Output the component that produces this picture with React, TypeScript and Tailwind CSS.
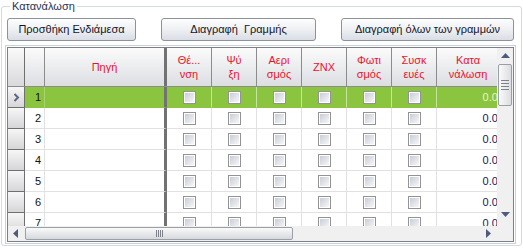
import React from "react";

const cols: { a: string; b?: string }[] = [
  { a: "Θέ...", b: "νση" },
  { a: "Ψύ", b: "ξη" },
  { a: "Αερι", b: "σμός" },
  { a: "ZNX" },
  { a: "Φωτι", b: "σμός" },
  { a: "Συσκ", b: "ευές" },
];

const rows = [1, 2, 3, 4, 5, 6, 7];

function Check() {
  return (
    <div className="w-[13px] h-[13px] border border-[#939393] bg-white p-px">
      <div className="w-full h-full bg-gradient-to-br from-[#c9cdd6] to-[#f6f7f9]" />
    </div>
  );
}

function Btn({ w, ml, children }: { w: string; ml: string; children: React.ReactNode }) {
  return (
    <button
      className={`${w} ${ml} h-[23px] rounded-[3px] border border-[#8d9198] bg-gradient-to-b from-[#fdfdfd] via-[#eef0f3] to-[#d9dee5] text-[#15152a] whitespace-pre text-center leading-[21px]`}
    >
      {children}
    </button>
  );
}

export default function App() {
  return (
    <div className="w-[523px] h-[249px] bg-white pl-px font-['Liberation_Sans',Arial,sans-serif] text-[11px] text-[#15152a] overflow-hidden">
      <fieldset className="w-[521px] h-[246px] border border-[#d3dae2] rounded-[3px] px-[5px]">
        <legend className="ml-[3px] px-[2px] leading-[13px] text-[#1e3556]">Κατανάλωση</legend>
        <div className="flex mt-[5px]">
          <Btn w="w-[129px]" ml="ml-0">Προσθήκη Ενδιάμεσα</Btn>
          <Btn w="w-[155px]" ml="ml-[25px]">Διαγραφή  Γραμμής</Btn>
          <Btn w="w-[173px]" ml="ml-[25px]">Διαγραφή όλων των γραμμών</Btn>
        </div>
        <div className="mt-[4px] -ml-[2px] w-[511px] border border-[#c9d1d9] p-px">
          <div className="w-[507px] h-[195px] border border-[#7c7f85] flex flex-col">
            <div className="flex h-[178px]">
              {/* data area */}
              <div className="w-[489px] h-[178px] overflow-hidden">
                {/* header */}
                <div className="flex h-[39px] w-max border-b border-[#8c8c8c] bg-gradient-to-b from-[#fbfbfb] to-[#dcdee2]">
                  <div className="w-[17px] border-r border-[#6f6f6f] bg-gradient-to-b from-[#fafafa] to-[#d9d9dc]" />
                  <div className="w-[20px] border-r border-[#8c8c8c]" />
                  <div className="w-[122px] border-r-[3px] border-[#727272] flex items-center justify-center text-[#f0102e]">
                    Πηγή
                  </div>
                  {cols.map((c, i) => (
                    <div
                      key={i}
                      className="w-[45px] border-r border-[#8c8c8c] flex flex-col items-center justify-center text-[#f0102e] leading-[14px]"
                    >
                      <span>{c.a}</span>
                      {c.b && <span>{c.b}</span>}
                    </div>
                  ))}
                  <div className="w-[70px] pr-[8px] flex flex-col items-center justify-center text-[#f0102e] leading-[14px]">
                    <span>Κατα</span>
                    <span>νάλωση</span>
                  </div>
                </div>
                {rows.map((r) => {
                  const sel = r === 1;
                  return (
                    <div key={r} className="flex h-[21px] w-max">
                      <div className="w-[17px] border-r border-b border-[#6f6f6f] bg-gradient-to-b from-[#f7f7f7] to-[#d6d6d9] flex items-center justify-center">
                        {sel && (
                          <svg width="7" height="9" viewBox="0 0 7 9">
                            <path d="M1.5 1 L5 4.5 L1.5 8" stroke="#5c6584" strokeWidth="2" fill="none" />
                          </svg>
                        )}
                      </div>
                      <div
                        className={`w-[20px] border-r border-b ${sel ? "bg-[#8bc53f] border-[#8bc53f] border-r-[#a9d56e]" : "bg-white border-[#e1e1e1]"} flex items-center justify-end pr-[3px] text-[#111]`}
                      >
                        {r}
                      </div>
                      <div
                        className={`w-[122px] border-r-[3px] border-r-[#727272] border-b ${sel ? "bg-[#8bc53f] border-b-[#8bc53f]" : "bg-white border-b-[#e1e1e1]"}`}
                      />
                      {cols.map((_, i) => (
                        <div
                          key={i}
                          className={`w-[45px] border-r border-b ${sel ? "bg-[#8bc53f] border-[#8bc53f] border-r-[#c7e3a0]" : "bg-white border-[#e1e1e1]"} flex items-center justify-center`}
                        >
                          <Check />
                        </div>
                      ))}
                      <div
                        className={`w-[70px] border-b ${sel ? "bg-[#8bc53f] border-[#8bc53f] text-[#e6f7d2]" : "bg-white border-[#e1e1e1] text-[#1a1656]"} flex items-center justify-end pr-[3px]`}
                      >
                        0.00
                      </div>
                    </div>
                  );
                })}
              </div>
              {/* vertical scrollbar */}
              <div className="w-[16px] h-[178px] bg-[#f0f0f0] flex flex-col items-center">
                <svg className="mt-[5px]" width="9" height="5" viewBox="0 0 9 5">
                  <path d="M0 5 L4.5 0 L9 5 Z" fill="#4f5b7c" />
                </svg>
                <div className="mt-[6px] w-[14px] h-[42px] rounded-[2px] border border-[#9a9ea5] bg-gradient-to-r from-[#fafafa] to-[#dcdde0] flex flex-col items-center justify-center gap-[2px]">
                  <div className="w-[8px] h-px bg-[#7d818a]" />
                  <div className="w-[8px] h-px bg-[#7d818a]" />
                  <div className="w-[8px] h-px bg-[#7d818a]" />
                  <div className="w-[8px] h-px bg-[#7d818a]" />
                </div>
                <div className="flex-1" />
                <svg className="mb-[9px]" width="9" height="5" viewBox="0 0 9 5">
                  <path d="M0 0 L9 0 L4.5 5 Z" fill="#4f5b7c" />
                </svg>
              </div>
            </div>
            {/* horizontal scrollbar */}
            <div className="flex h-[15px]">
              <div className="w-[489px] bg-[#f0f0f0] flex items-center">
                <svg className="ml-[5px]" width="5" height="9" viewBox="0 0 5 9">
                  <path d="M5 0 L0 4.5 L5 9 Z" fill="#4f5b7c" />
                </svg>
                <div className="ml-[7px] w-[268px] h-[13px] rounded-[2px] border border-[#9a9ea5] bg-gradient-to-b from-[#fafafa] to-[#d6d8dc] flex items-center justify-center gap-[1px]">
                  <div className="w-px h-[7px] bg-[#7d818a]" />
                  <div className="w-px h-[7px] bg-[#7d818a]" />
                  <div className="w-px h-[7px] bg-[#7d818a]" />
                  <div className="w-px h-[7px] bg-[#7d818a]" />
                </div>
                <div className="flex-1" />
                <svg className="mr-[6px]" width="5" height="9" viewBox="0 0 5 9">
                  <path d="M0 0 L5 4.5 L0 9 Z" fill="#4f5b7c" />
                </svg>
              </div>
              <div className="w-[16px] bg-[#f0f0f0]" />
            </div>
          </div>
        </div>
      </fieldset>
    </div>
  );
}
